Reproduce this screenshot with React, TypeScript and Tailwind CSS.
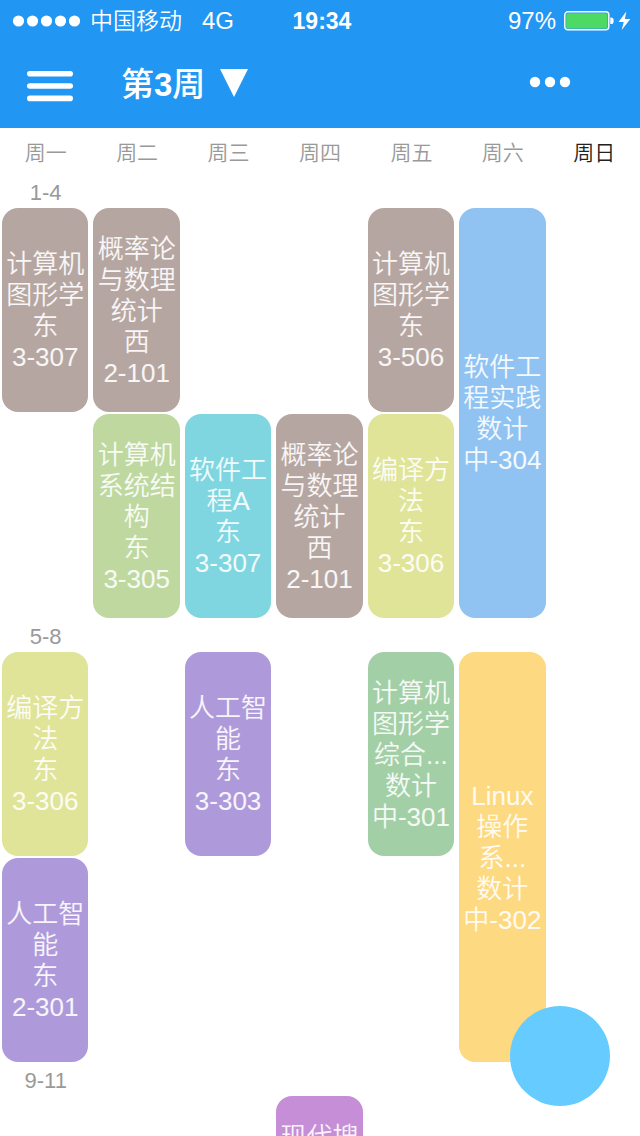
type Course = {
  day: number;
  start: number;
  span: number;
  color: string;
  lines: string[];
  top?: boolean;
};

type Section = { label: string; courses: Course[] };

const DAYS = ['周一', '周二', '周三', '周四', '周五', '周六', '周日'];

const COLUMN = [
  'col-start-1',
  'col-start-2',
  'col-start-3',
  'col-start-4',
  'col-start-5',
  'col-start-6',
  'col-start-7',
];
const ROW = ['row-start-1', 'row-start-2'];
const SPAN = ['row-span-1', 'row-span-2'];

const BROWN = 'bg-[#b6a6a1]';
const GREEN = 'bg-[#bed89f]';
const CYAN = 'bg-[#7fd6e0]';
const LIME = 'bg-[#dfe498]';
const BLUE = 'bg-[#90c3f2]';
const PURPLE = 'bg-[#ae9ada]';
const MINT = 'bg-[#a2cfa6]';
const AMBER = 'bg-[#fdd981]';
const PINK = 'bg-[#c58ed6]';

const SECTIONS: Section[] = [
  {
    label: '1-4',
    courses: [
      { day: 0, start: 0, span: 1, color: BROWN, lines: ['计算机', '图形学', '东', '3-307'] },
      { day: 1, start: 0, span: 1, color: BROWN, lines: ['概率论', '与数理', '统计', '西', '2-101'] },
      { day: 1, start: 1, span: 1, color: GREEN, lines: ['计算机', '系统结', '构', '东', '3-305'] },
      { day: 2, start: 1, span: 1, color: CYAN, lines: ['软件工', '程A', '东', '3-307'] },
      { day: 3, start: 1, span: 1, color: BROWN, lines: ['概率论', '与数理', '统计', '西', '2-101'] },
      { day: 4, start: 0, span: 1, color: BROWN, lines: ['计算机', '图形学', '东', '3-506'] },
      { day: 4, start: 1, span: 1, color: LIME, lines: ['编译方', '法', '东', '3-306'] },
      { day: 5, start: 0, span: 2, color: BLUE, lines: ['软件工', '程实践', '数计', '中-304'] },
    ],
  },
  {
    label: '5-8',
    courses: [
      { day: 0, start: 0, span: 1, color: LIME, lines: ['编译方', '法', '东', '3-306'] },
      { day: 0, start: 1, span: 1, color: PURPLE, lines: ['人工智', '能', '东', '2-301'] },
      { day: 2, start: 0, span: 1, color: PURPLE, lines: ['人工智', '能', '东', '3-303'] },
      { day: 4, start: 0, span: 1, color: MINT, lines: ['计算机', '图形学', '综合...', '数计', '中-301'] },
      { day: 5, start: 0, span: 2, color: AMBER, lines: ['Linux', '操作', '系...', '数计', '中-302'] },
    ],
  },
  {
    label: '9-11',
    courses: [{ day: 3, start: 0, span: 1, color: PINK, lines: ['现代搜'], top: true }],
  },
];

function StatusBar() {
  return (
    <div className="grid h-10 grid-cols-[1fr_auto_1fr] items-center pt-[2px] pr-2 pl-3 text-[24px] leading-8">
      <div className="flex items-center">
        <svg width="68" height="12" viewBox="0 0 68 12" fill="currentColor" aria-hidden="true">
          <circle cx="6.5" cy="6" r="5.6" />
          <circle cx="20.5" cy="6" r="5.6" />
          <circle cx="34.5" cy="6" r="5.6" />
          <circle cx="48.5" cy="6" r="5.6" />
          <circle cx="62.5" cy="6" r="5.6" />
        </svg>
        <span className="ml-2.5 text-[23px] font-[350]">中国移动</span>
        <span className="ml-5">4G</span>
      </div>
      <span className="text-[23px] font-bold">19:34</span>
      <div className="flex items-center justify-end">
        <span>97%</span>
        <svg className="ml-2" width="68" height="20" viewBox="0 0 68 20" aria-hidden="true">
          <rect x="0.8" y="0.8" width="44" height="18" rx="3" fill="none" stroke="white" strokeWidth="1.4" />
          <rect x="2.2" y="2.2" width="41.2" height="15.2" rx="1.5" fill="#4cd964" />
          <path d="M46.3 6.5h0.7a2.6 2.6 0 0 1 2.6 2.6v1.4a2.6 2.6 0 0 1-2.6 2.6h-0.7z" fill="white" />
          <path d="M62.3 0.5L54.5 11h5.2l-2 8L66.3 8h-5.4z" fill="white" />
        </svg>
      </div>
    </div>
  );
}

function NavBar() {
  return (
    <div className="flex h-[88px] items-center pr-[69px] pl-[26px]">
      <button type="button" aria-label="菜单" className="flex h-12 items-center pt-1">
        <svg width="48" height="32" viewBox="0 0 48 32" fill="currentColor" aria-hidden="true">
          <rect x="1" y="1" width="46" height="5.6" rx="2.8" />
          <rect x="1" y="13.2" width="46" height="5.6" rx="2.8" />
          <rect x="1" y="25.6" width="46" height="5.6" rx="2.8" />
        </svg>
      </button>
      <button type="button" className="ml-[47px] flex h-12 items-center gap-[15px] text-[33px] leading-10 font-medium">
        <span className="pt-[2px]">
          第<b className="font-bold">3</b>周
        </span>
        <svg width="28" height="30" viewBox="0 0 28 30" fill="currentColor" aria-hidden="true">
          <path d="M0 0h28L14 28z" />
        </svg>
      </button>
      <button type="button" aria-label="更多" className="ml-auto flex h-12 items-center pb-1">
        <svg width="42" height="12" viewBox="0 0 42 12" fill="currentColor" aria-hidden="true">
          <circle cx="6" cy="6" r="5.2" />
          <circle cx="21" cy="6" r="5.2" />
          <circle cx="36" cy="6" r="5.2" />
        </svg>
      </button>
    </div>
  );
}

function CourseCard({ course }: { course: Course }) {
  return (
    <button
      type="button"
      className={`mr-[3px] ml-[2px] flex flex-col items-center rounded-2xl text-[26px] leading-[31px] font-[350] whitespace-nowrap text-white/90 ${
        course.top ? 'justify-start pt-[26px]' : 'justify-center pt-[2px]'
      } ${course.color} ${COLUMN[course.day]} ${ROW[course.start]} ${SPAN[course.span - 1]}`}
    >
      {course.lines.map((line, i) => (
        <span key={i}>{line}</span>
      ))}
    </button>
  );
}

export default function App() {
  return (
    <div className="relative flex h-screen flex-col bg-white font-['Liberation_Sans','Noto_Sans_CJK_SC',sans-serif]">
      <header className="shrink-0 bg-[#2196f3] text-white">
        <StatusBar />
        <NavBar />
      </header>
      <main className="min-h-0 flex-1 overflow-y-auto [scrollbar-width:none]">
        <div className="grid h-[46px] grid-cols-7 items-center pt-[4px] text-center text-[21px] leading-8 font-[350] text-[#999]">
          {DAYS.map((day, i) => (
            <span key={day} className={i === 6 ? 'text-[#222]' : ''}>
              {day}
            </span>
          ))}
        </div>
        {SECTIONS.map((section) => (
          <section key={section.label}>
            <h2 className="flex h-[34px] w-1/7 items-center justify-center pt-[4px] text-[22px] leading-8 text-[#999]">
              {section.label}
            </h2>
            <div className="grid auto-rows-[204px] grid-cols-7 gap-y-[2px]">
              {section.courses.map((course) => (
                <CourseCard key={`${course.day}-${course.start}`} course={course} />
              ))}
            </div>
          </section>
        ))}
      </main>
      <button
        type="button"
        aria-label="添加"
        className="absolute right-[30px] bottom-[30px] size-[100px] rounded-full bg-[#66ccff]"
      />
    </div>
  );
}
